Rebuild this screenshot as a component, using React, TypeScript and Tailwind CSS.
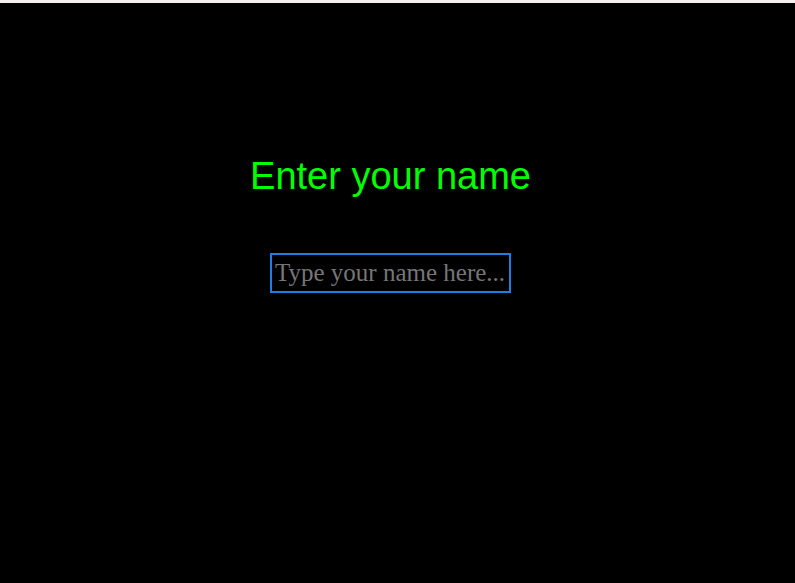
import { useState } from "react";

export default function App() {
  const [name, setName] = useState("");

  return (
    <div className="min-h-[583px] bg-[#f4efed] pt-[3px]">
      <div className="flex min-h-[580px] flex-col items-center bg-black pr-[14px] pt-[150px]">
        <h1 className="font-['Liberation_Sans',Arial,sans-serif] text-[38px] leading-[46px] text-[#00ff00]">
          Enter your name
        </h1>
        <input
          value={name}
          onChange={(e) => setName(e.target.value)}
          placeholder="Type your name here..."
          className="mt-[54px] h-[40px] w-[241px] border-2 border-[#1d7fe3] bg-black px-[3px] font-['Liberation_Serif','Times_New_Roman',serif] text-[25px] text-white outline-none placeholder:text-[#767676]"
        />
      </div>
    </div>
  );
}
